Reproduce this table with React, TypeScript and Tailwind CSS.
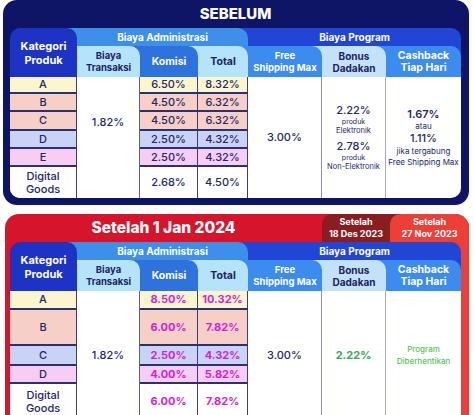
import React from "react";

const COLS = "grid grid-cols-[67px_63px_58px_50px_74px_64px_75px]";

type Cell = { text: string[]; cls: string; behind: string; bg: string };

function Header({ katBehind, progBehind }: { katBehind: string; progBehind: string }) {
  const tabs: Cell[] = [
    { text: ["Biaya", "Transaksi"], cls: "text-[9.5px] leading-[12px] text-[#1f2262]", behind: "bg-[#2e73dd]", bg: "bg-[#b4e3fa]" },
    { text: ["Komisi"], cls: "text-[10.5px] text-white", behind: "bg-[#b4e3fa]", bg: "bg-[#2e73dd]" },
    { text: ["Total"], cls: "text-[10.5px] text-[#1f2262]", behind: "bg-[#3c8cf0]", bg: "bg-[#b4e3fa]" },
    { text: ["Free", "Shipping Max"], cls: "text-[9.5px] leading-[12px] text-white", behind: "bg-[#c3e1f8]", bg: "bg-[#3c8cf0]" },
    { text: ["Bonus", "Dadakan"], cls: "text-[10px] leading-[12px] text-[#1f2262]", behind: "bg-[#3c8cf0]", bg: "bg-[#c3e1f8]" },
    { text: ["Cashback", "Tiap Hari"], cls: "text-[10.5px] leading-[12px] text-white", behind: "bg-[#2146d6]", bg: "bg-[#3c8cf0]" },
  ];
  return (
    <div className={`${COLS} grid-rows-[18px_31px] font-bold`}>
      <div className={`row-span-2 ${katBehind}`}>
        <div className="flex h-full flex-col items-center justify-center rounded-t-[10px] bg-[#1c33c4] text-[11px] leading-[14px] text-white">
          <span>Kategori</span>
          <span>Produk</span>
        </div>
      </div>
      <div className="col-span-3 bg-[#2146d6]">
        <div className="flex h-full items-center justify-center rounded-tr-[10px] bg-[#3d8fe9] text-[10px] text-white">
          Biaya Administrasi
        </div>
      </div>
      <div className={`col-span-3 ${progBehind}`}>
        <div className="flex h-full items-center justify-center rounded-tr-[10px] bg-[#2146d6] text-[10px] text-white">
          Biaya Program
        </div>
      </div>
      {tabs.map((t) => (
        <div key={t.text.join()} className={t.behind}>
          <div className={`flex h-full flex-col items-center justify-center rounded-tr-[10px] ${t.bg} ${t.cls}`}>
            {t.text.map((s) => (
              <span key={s}>{s}</span>
            ))}
          </div>
        </div>
      ))}
    </div>
  );
}

type Row = { label: string[]; kom: string; tot: string; bg: string };

function Body({
  rows,
  rowsCls,
  transSpan,
  blankTrans,
  progSpan,
  numCls,
  free,
  bonus,
  cash,
  rounded,
}: {
  rows: Row[];
  rowsCls: string;
  transSpan: string;
  blankTrans: boolean;
  progSpan: string;
  numCls: string;
  free: React.ReactNode;
  bonus: React.ReactNode;
  cash: React.ReactNode;
  rounded: string;
}) {
  const cells: React.ReactNode[] = [];
  rows.forEach((r, i) => {
    const last = i === rows.length - 1;
    const hb = last ? "" : "border-b-2 border-b-[#2c2f70]";
    cells.push(
      <div
        key={`k${i}`}
        className={`flex flex-col items-center justify-center border-r border-r-[#3a3d80] text-[11px] font-medium leading-[13px] text-[#23266b] ${r.bg} ${hb}`}
      >
        {r.label.map((s) => (
          <span key={s}>{s}</span>
        ))}
      </div>
    );
    if (i === 0) {
      cells.push(
        <div
          key="trans"
          className={`flex items-center justify-center border-r border-r-[#5b5e98] text-[11px] font-medium text-[#23266b] ${transSpan}`}
        >
          1.82%
        </div>
      );
    }
    if (last && blankTrans) {
      cells.push(<div key="tb" className="border-r border-r-[#5b5e98]" />);
    }
    cells.push(
      <div key={`m${i}`} className={`flex items-center justify-center border-r border-r-[#3a3d80] ${numCls} ${r.bg} ${hb}`}>
        {r.kom}
      </div>
    );
    cells.push(
      <div key={`t${i}`} className={`flex items-center justify-center border-r border-r-[#3a3d80] ${numCls} ${r.bg} ${hb}`}>
        {r.tot}
      </div>
    );
    if (i === 0) {
      cells.push(
        <div key="free" className={`flex items-center justify-center border-r border-r-[#8e90bc] ${progSpan}`}>
          {free}
        </div>
      );
      cells.push(
        <div key="bonus" className={`flex items-center justify-center border-r border-r-[#a6a8c9] ${progSpan}`}>
          {bonus}
        </div>
      );
      cells.push(
        <div key="cash" className={`flex items-center justify-center ${progSpan}`}>
          {cash}
        </div>
      );
    }
  });
  return <div className={`${COLS} ${rowsCls} overflow-hidden bg-white ${rounded}`}>{cells}</div>;
}

const topRows: Row[] = [
  { label: ["A"], kom: "6.50%", tot: "8.32%", bg: "bg-[#fdf5cd]" },
  { label: ["B"], kom: "4.50%", tot: "6.32%", bg: "bg-[#f6d0c6]" },
  { label: ["C"], kom: "4.50%", tot: "6.32%", bg: "bg-[#f6d0c6]" },
  { label: ["D"], kom: "2.50%", tot: "4.32%", bg: "bg-[#c9d3f5]" },
  { label: ["E"], kom: "2.50%", tot: "4.32%", bg: "bg-[#f8cdf3]" },
  { label: ["Digital", "Goods"], kom: "2.68%", tot: "4.50%", bg: "bg-white" },
];

const bottomRows: Row[] = [
  { label: ["A"], kom: "8.50%", tot: "10.32%", bg: "bg-[#fdf5cd]" },
  { label: ["B"], kom: "6.00%", tot: "7.82%", bg: "bg-[#f6d0c6]" },
  { label: ["C"], kom: "2.50%", tot: "4.32%", bg: "bg-[#c9d3f5]" },
  { label: ["D"], kom: "4.00%", tot: "5.82%", bg: "bg-[#f8cdf3]" },
  { label: ["Digital", "Goods"], kom: "6.00%", tot: "7.82%", bg: "bg-white" },
];

export default function App() {
  return (
    <div className="h-[415px] w-[474px] overflow-hidden bg-white font-['Inter',sans-serif]">
      <div className="ml-[3px] w-[466px] rounded-[14px] bg-[#0f1566] pb-[7px] pl-[7px] pr-[8px]">
        <div className="flex h-[28px] items-center justify-center text-[15px] font-extrabold text-white">SEBELUM</div>
        <Header
          katBehind="bg-[linear-gradient(90deg,#0f1566_50%,#3d8fe9_50%)]"
          progBehind="bg-[#0f1566]"
        />
        <Body
          rows={topRows}
          rowsCls="grid-rows-[17px_18px_19px_18px_18px_31px]"
          transSpan="row-span-5"
          blankTrans
          progSpan="row-span-6"
          numCls="text-[11px] font-medium text-[#23266b]"
          rounded="rounded-b-[10px]"
          free={<span className="text-[11px] font-medium text-[#23266b]">3.00%</span>}
          bonus={
            <div className="flex flex-col items-center text-[#23266b]">
              <span className="text-[11px] font-medium leading-[13px]">2.22%</span>
              <span className="text-[7px] leading-[9px]">produk</span>
              <span className="text-[7.5px] leading-[10px]">Elektronik</span>
              <span className="mt-[4px] text-[11px] font-medium leading-[13px]">2.78%</span>
              <span className="text-[7px] leading-[9px]">produk</span>
              <span className="text-[7.5px] leading-[10px]">Non-Elektronik</span>
            </div>
          }
          cash={
            <div className="flex flex-col items-center text-[#23266b]">
              <span className="text-[11px] font-semibold leading-[13px]">1.67%</span>
              <span className="text-[8px] leading-[11px]">atau</span>
              <span className="text-[11px] font-medium leading-[13px]">1.11%</span>
              <span className="text-[8px] leading-[12px]">jika tergabung</span>
              <span className="text-[8px] leading-[11px]">Free Shipping Max</span>
            </div>
          }
        />
      </div>

      <div className="ml-[5px] mt-[9px] w-[464px] overflow-hidden rounded-t-[14px]">
        <div className="flex h-[28px]">
          <div className="flex w-[317px] items-center justify-center bg-[#d6152c] text-[15.5px] font-extrabold text-white">
            Setelah 1 Jan 2024
          </div>
          <div className="w-[68px] bg-[#d6152c]">
            <div className="flex h-full flex-col items-center justify-center rounded-tl-[10px] bg-[#8a1d20] text-[9px] font-bold leading-[12px] text-white">
              <span>Setelah</span>
              <span>18 Des 2023</span>
            </div>
          </div>
          <div className="w-[79px] bg-[#8a1d20]">
            <div className="flex h-full flex-col items-center justify-center rounded-tl-[10px] bg-[#ee3f37] text-[9px] font-bold leading-[12px] text-white">
              <span>Setelah</span>
              <span>27 Nov 2023</span>
            </div>
          </div>
        </div>
        <div className="border-r-[8px] border-r-[#ee3f37] bg-[#d6152c] pl-[5px]">
          <Header
            katBehind="bg-[linear-gradient(90deg,#d6152c_50%,#3d8fe9_50%)]"
            progBehind="bg-[#ee3f37]"
          />
          <Body
            rows={bottomRows}
            rowsCls="grid-rows-[19px_36px_20px_18px_35px]"
            transSpan="row-span-5"
            blankTrans={false}
            progSpan="row-span-5"
            numCls="text-[11px] font-bold text-[#d41fd4]"
            rounded=""
            free={<span className="text-[11px] font-medium text-[#23266b]">3.00%</span>}
            bonus={<span className="text-[11px] font-bold text-[#35a853]">2.22%</span>}
            cash={
              <div className="flex flex-col items-center text-[8px] font-medium leading-[12px] text-[#56c35b]">
                <span>Program</span>
                <span>Diberhentikan</span>
              </div>
            }
          />
        </div>
      </div>
    </div>
  );
}
